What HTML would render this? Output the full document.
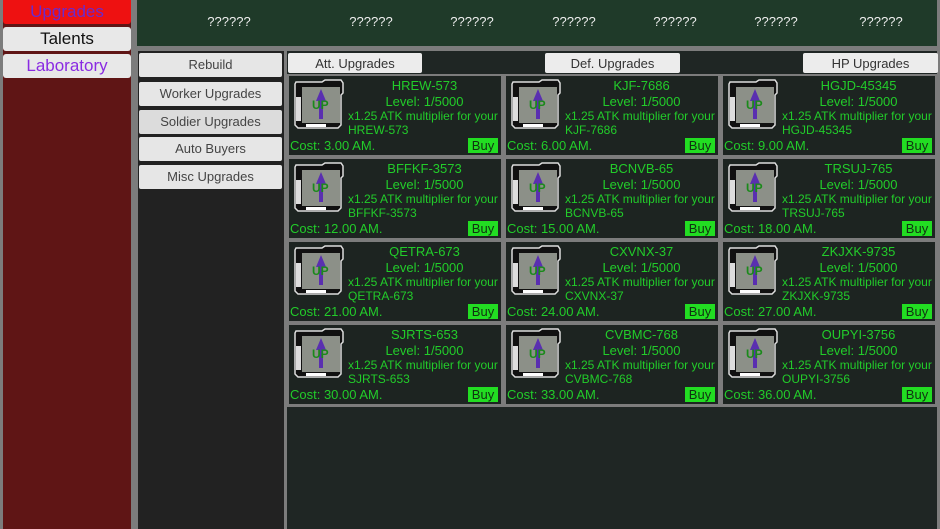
<!DOCTYPE html>
<html><head><meta charset="utf-8"><style>
*{margin:0;padding:0;box-sizing:border-box}
body{width:940px;height:529px;background:#7c7c7c;position:relative;overflow:hidden;font-family:"Liberation Sans",sans-serif}
.a{position:absolute}
.lb{left:3px;width:128px;height:24px;border-radius:3px;background:#e8e8e8;font-size:17px;text-align:center;line-height:24px}
.sb{left:139px;width:143px;height:24px;border-radius:2px;background:#e6e6e6;color:#444;font-size:13px;text-align:center;line-height:24px}
.tab{top:53px;height:20px;background:#ececec;color:#333;font-size:13px;text-align:center;line-height:21px;border-radius:2px}
.q{top:14px;color:#eee;font-size:13px;width:80px;text-align:center}
.c{position:absolute;width:212px;height:79px;background:#1d2421;color:#22cc2a;overflow:hidden}
.c svg{position:absolute;left:3px;top:3px}
.t{position:absolute;left:59px;right:0;text-align:center;font-size:13px;line-height:15px}
.d{position:absolute;left:59px;font-size:12px;white-space:nowrap;line-height:14px}
.cost{position:absolute;left:1px;top:62px;font-size:13px}
.buy{position:absolute;right:3px;top:62px;background:#22dd22;font-size:13px;width:30px;text-align:center;line-height:15px;color:#113311}
</style></head><body>
<svg width="0" height="0" style="position:absolute"><defs><symbol id="ic" viewBox="0 0 54 50">
<path d="M4 3h26l3-2h16l2 3v10l-2 2v30l-3 3H6l-3-3V5z" fill="#111" stroke="#ddd" stroke-width="1.5"/>
<rect x="4" y="18" width="5" height="24" fill="#ddd"/><rect x="10" y="8" width="38" height="36" fill="#8c9088"/>
<rect x="14" y="45" width="20" height="3" fill="#fff"/>
<path d="M29 10l-5 12h3v18h4V22h3z" fill="#5a2fb0"/>
<text x="20" y="30" font-size="12" font-weight="bold" fill="#1a8a1a" font-family="Liberation Sans">UP</text>
</symbol></defs></svg>
<div class="a" style="left:3px;top:0;width:128px;height:529px;background:#5f1515"></div>
<div class="a lb" style="top:0;background:#ee1111;color:#6a2acc;border-radius:0 0 3px 3px">Upgrades</div>
<div class="a lb" style="top:27px;color:#111">Talents</div>
<div class="a lb" style="top:54px;color:#8a2be2">Laboratory</div>
<div class="a" style="left:137px;top:0;width:800px;height:46px;background:#1f3a29"></div>
<div class="a q" style="left:189px">??????</div><div class="a q" style="left:331px">??????</div><div class="a q" style="left:432px">??????</div><div class="a q" style="left:534px">??????</div><div class="a q" style="left:635px">??????</div><div class="a q" style="left:736px">??????</div><div class="a q" style="left:841px">??????</div>
<div class="a" style="left:138px;top:51px;width:146px;height:478px;background:#222"></div>
<div class="a sb" style="top:53px">Rebuild</div>
<div class="a sb" style="top:82px">Worker Upgrades</div>
<div class="a sb" style="top:110px;background:#dcdcdc">Soldier Upgrades</div>
<div class="a sb" style="top:137px">Auto Buyers</div>
<div class="a sb" style="top:165px">Misc Upgrades</div>
<div class="a" style="left:287px;top:51px;width:650px;height:478px;background:#1f2624"></div>
<div class="a tab" style="left:288px;width:134px">Att. Upgrades</div>
<div class="a tab" style="left:545px;width:135px">Def. Upgrades</div>
<div class="a tab" style="left:803px;width:135px">HP Upgrades</div>
<div class="a" style="left:287px;top:74px;width:651px;height:333px;background:#7c7c7c"></div>

<div class="c" style="left:289px;top:76px"><svg width="54" height="50"><use href="#ic"/></svg><div class="t" style="top:2px">HREW-573</div><div class="t" style="top:18px">Level: 1/5000</div><div class="d" style="top:33px">x1.25 ATK multiplier for your</div><div class="d" style="top:47px">HREW-573</div><div class="cost">Cost: 3.00 AM.</div><div class="buy">Buy</div></div>
<div class="c" style="left:506px;top:76px"><svg width="54" height="50"><use href="#ic"/></svg><div class="t" style="top:2px">KJF-7686</div><div class="t" style="top:18px">Level: 1/5000</div><div class="d" style="top:33px">x1.25 ATK multiplier for your</div><div class="d" style="top:47px">KJF-7686</div><div class="cost">Cost: 6.00 AM.</div><div class="buy">Buy</div></div>
<div class="c" style="left:723px;top:76px"><svg width="54" height="50"><use href="#ic"/></svg><div class="t" style="top:2px">HGJD-45345</div><div class="t" style="top:18px">Level: 1/5000</div><div class="d" style="top:33px">x1.25 ATK multiplier for your</div><div class="d" style="top:47px">HGJD-45345</div><div class="cost">Cost: 9.00 AM.</div><div class="buy">Buy</div></div>

<div class="c" style="left:289px;top:159px"><svg width="54" height="50"><use href="#ic"/></svg><div class="t" style="top:2px">BFFKF-3573</div><div class="t" style="top:18px">Level: 1/5000</div><div class="d" style="top:33px">x1.25 ATK multiplier for your</div><div class="d" style="top:47px">BFFKF-3573</div><div class="cost">Cost: 12.00 AM.</div><div class="buy">Buy</div></div>
<div class="c" style="left:506px;top:159px"><svg width="54" height="50"><use href="#ic"/></svg><div class="t" style="top:2px">BCNVB-65</div><div class="t" style="top:18px">Level: 1/5000</div><div class="d" style="top:33px">x1.25 ATK multiplier for your</div><div class="d" style="top:47px">BCNVB-65</div><div class="cost">Cost: 15.00 AM.</div><div class="buy">Buy</div></div>
<div class="c" style="left:723px;top:159px"><svg width="54" height="50"><use href="#ic"/></svg><div class="t" style="top:2px">TRSUJ-765</div><div class="t" style="top:18px">Level: 1/5000</div><div class="d" style="top:33px">x1.25 ATK multiplier for your</div><div class="d" style="top:47px">TRSUJ-765</div><div class="cost">Cost: 18.00 AM.</div><div class="buy">Buy</div></div>

<div class="c" style="left:289px;top:242px"><svg width="54" height="50"><use href="#ic"/></svg><div class="t" style="top:2px">QETRA-673</div><div class="t" style="top:18px">Level: 1/5000</div><div class="d" style="top:33px">x1.25 ATK multiplier for your</div><div class="d" style="top:47px">QETRA-673</div><div class="cost">Cost: 21.00 AM.</div><div class="buy">Buy</div></div>
<div class="c" style="left:506px;top:242px"><svg width="54" height="50"><use href="#ic"/></svg><div class="t" style="top:2px">CXVNX-37</div><div class="t" style="top:18px">Level: 1/5000</div><div class="d" style="top:33px">x1.25 ATK multiplier for your</div><div class="d" style="top:47px">CXVNX-37</div><div class="cost">Cost: 24.00 AM.</div><div class="buy">Buy</div></div>
<div class="c" style="left:723px;top:242px"><svg width="54" height="50"><use href="#ic"/></svg><div class="t" style="top:2px">ZKJXK-9735</div><div class="t" style="top:18px">Level: 1/5000</div><div class="d" style="top:33px">x1.25 ATK multiplier for your</div><div class="d" style="top:47px">ZKJXK-9735</div><div class="cost">Cost: 27.00 AM.</div><div class="buy">Buy</div></div>

<div class="c" style="left:289px;top:325px"><svg width="54" height="50"><use href="#ic"/></svg><div class="t" style="top:2px">SJRTS-653</div><div class="t" style="top:18px">Level: 1/5000</div><div class="d" style="top:33px">x1.25 ATK multiplier for your</div><div class="d" style="top:47px">SJRTS-653</div><div class="cost">Cost: 30.00 AM.</div><div class="buy">Buy</div></div>
<div class="c" style="left:506px;top:325px"><svg width="54" height="50"><use href="#ic"/></svg><div class="t" style="top:2px">CVBMC-768</div><div class="t" style="top:18px">Level: 1/5000</div><div class="d" style="top:33px">x1.25 ATK multiplier for your</div><div class="d" style="top:47px">CVBMC-768</div><div class="cost">Cost: 33.00 AM.</div><div class="buy">Buy</div></div>
<div class="c" style="left:723px;top:325px"><svg width="54" height="50"><use href="#ic"/></svg><div class="t" style="top:2px">OUPYI-3756</div><div class="t" style="top:18px">Level: 1/5000</div><div class="d" style="top:33px">x1.25 ATK multiplier for your</div><div class="d" style="top:47px">OUPYI-3756</div><div class="cost">Cost: 36.00 AM.</div><div class="buy">Buy</div></div>
</body></html>
